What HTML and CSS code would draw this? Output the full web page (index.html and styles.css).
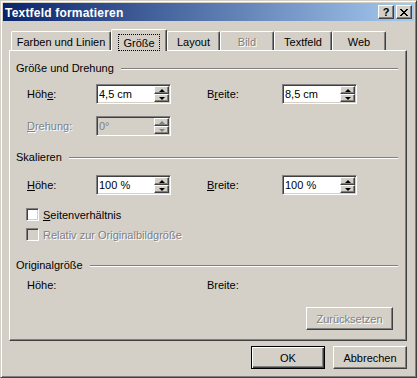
FILE: index.html
```html
<!DOCTYPE html>
<html lang="de">
<head>
    <meta charset="UTF-8">
    <title>Textfeld formatieren</title>
    <link rel="stylesheet" href="styles.css">
</head>
<body>

<div class="window">
    <div class="titlebar">
        <span class="title">Textfeld formatieren</span>
        <div class="caption-buttons">
            <div class="cap-btn cap-help">?</div>
            <div class="cap-btn">
                <svg width="8" height="7" viewBox="0 0 8 7" shape-rendering="crispEdges"><path fill="#000" d="M0 0h2v1H0zM6 0h2v1H6zM1 1h2v1H1zM5 1h2v1H5zM2 2h4v1H2zM3 3h2v1H3zM2 4h4v1H2zM1 5h2v1H1zM5 5h2v1H5zM0 6h2v1H0zM6 6h2v1H6z"/></svg>
            </div>
        </div>
    </div>

    <div class="dialog">
        <!-- Reiter -->
        <div class="tabs">
            <div class="tab" style="width: 100px;">Farben und Linien</div>
            <div class="tab tab-active" style="width: 56px;"><span class="focus">Größe</span></div>
            <div class="tab" style="width: 53px;">Layout</div>
            <div class="tab tab-disabled" style="width: 54px;">Bild</div>
            <div class="tab" style="width: 58px;">Textfeld</div>
            <div class="tab" style="width: 54px;">Web</div>
        </div>

        <div class="panel">
            <div class="group-title"><span>Größe und Drehung</span><i class="etch"></i></div>
            <div class="field-row row-1">
                <div class="field">
                    <label>Höh<u>e</u>:</label>
                    <div class="spin">
                        <span class="spin-value">4,5 cm</span>
                        <div class="spin-btns">
                            <div class="spin-btn"><i class="arrow-up"></i></div>
                            <div class="spin-btn"><i class="arrow-down"></i></div>
                        </div>
                    </div>
                </div>
                <div class="field">
                    <label>B<u>r</u>eite:</label>
                    <div class="spin">
                        <span class="spin-value">8,5 cm</span>
                        <div class="spin-btns">
                            <div class="spin-btn"><i class="arrow-up"></i></div>
                            <div class="spin-btn"><i class="arrow-down"></i></div>
                        </div>
                    </div>
                </div>
            </div>
            <div class="field-row row-2">
                <div class="field">
                    <label class="disabled"><u>D</u>rehung:</label>
                    <div class="spin spin-disabled">
                        <span class="spin-value">0°</span>
                        <div class="spin-btns">
                            <div class="spin-btn"><i class="arrow-up"></i></div>
                            <div class="spin-btn"><i class="arrow-down"></i></div>
                        </div>
                    </div>
                </div>
            </div>

            <div class="group-title group-2"><span>Skalieren</span><i class="etch"></i></div>
            <div class="field-row row-3">
                <div class="field">
                    <label><u>H</u>öhe:</label>
                    <div class="spin">
                        <span class="spin-value">100 %</span>
                        <div class="spin-btns">
                            <div class="spin-btn"><i class="arrow-up"></i></div>
                            <div class="spin-btn"><i class="arrow-down"></i></div>
                        </div>
                    </div>
                </div>
                <div class="field">
                    <label><u>B</u>reite:</label>
                    <div class="spin">
                        <span class="spin-value">100 %</span>
                        <div class="spin-btns">
                            <div class="spin-btn"><i class="arrow-up"></i></div>
                            <div class="spin-btn"><i class="arrow-down"></i></div>
                        </div>
                    </div>
                </div>
            </div>
            <div class="check-row check-1">
                <span class="checkbox"></span>
                <span><u>S</u>eitenverhältnis</span>
            </div>
            <div class="check-row check-2">
                <span class="checkbox checkbox-disabled"></span>
                <span class="disabled">Relativ zur Originalbildgröße</span>
            </div>

            <div class="group-title group-3"><span>Originalgröße</span><i class="etch"></i></div>
            <div class="field-row row-4">
                <div class="field"><label>Höhe:</label></div>
                <div class="field"><label>Breite:</label></div>
            </div>
            <div class="reset-row">
                <div class="btn btn-disabled" style="width: 87px;">Zurücksetzen</div>
            </div>
        </div>

        <div class="buttons">
            <div class="btn btn-default">OK</div>
            <div class="btn">Abbrechen</div>
        </div>
    </div>
</div>

</body>
</html>
```

FILE: styles.css
```css
/* Klassischer Windows-Dialog */
body {
    margin: 0;
    font-family: "Liberation Sans", Arial, sans-serif;
    font-size: 11px;
    color: #000;
}

.window {
    width: 417px;
    height: 378px;
    box-sizing: border-box;
    background-color: #d4d0c8;
    border: 1px solid;
    border-color: #d4d0c8 #404040 #404040 #d4d0c8;
    box-shadow: inset 1px 1px #fff, inset -1px -1px #808080;
    padding: 2px;
}

.titlebar {
    height: 18px;
    display: flex;
    align-items: center;
    padding: 0 2px;
    background: linear-gradient(to right, #0a246a, #a6caf0);
}

.title {
    flex: 1;
    color: #fff;
    font-weight: bold;
    font-size: 12px;
    letter-spacing: 0.2px;
    padding-top: 1px;
}

.caption-buttons {
    display: flex;
    gap: 2px;
}

.cap-btn {
    width: 16px;
    height: 14px;
    box-sizing: border-box;
    display: flex;
    justify-content: center;
    align-items: center;
    background-color: #d4d0c8;
    border: 1px solid;
    border-color: #fff #404040 #404040 #fff;
    box-shadow: inset -1px -1px #808080;
}

.cap-help {
    font-weight: bold;
    font-size: 11px;
    line-height: 12px;
}

.dialog {
    padding: 8px 7px 0 6px;
}

/* Reiter */
.tabs {
    display: flex;
    align-items: flex-end;
    height: 21px;
    padding-left: 2px;
}

.tab {
    height: 19px;
    box-sizing: border-box;
    display: flex;
    justify-content: center;
    align-items: center;
    border-top: 1px solid #fff;
    border-left: 1px solid #fff;
    border-right: 1px solid #404040;
    border-radius: 2px 2px 0 0;
    box-shadow: inset -1px 0 #808080;
    padding-top: 1px;
}

.tab-active {
    position: relative;
    z-index: 1;
    height: 22px;
    margin-bottom: -1px;
    background-color: #d4d0c8;
    padding-top: 3px;
}

.focus {
    border: 1px dotted #000;
    padding: 2px 4px 1px;
    line-height: 12px;
}

.tab-disabled,
.disabled {
    color: #808080;
    text-shadow: 1px 1px 0 #fff;
}

.panel {
    width: 398px;
    height: 291px;
    box-sizing: border-box;
    border: 1px solid;
    border-color: #fff #404040 #404040 #fff;
    box-shadow: inset -1px -1px #808080;
    padding: 11px 8px 0 6px;
}

.group-title {
    display: flex;
    align-items: center;
    height: 13px;
    line-height: 13px;
}

.etch {
    flex: 1;
    margin-left: 7px;
    border-top: 1px solid #808080;
    border-bottom: 1px solid #fff;
}

.group-2 { margin-top: 15px; }
.group-3 { margin-top: 18px; }

.field-row {
    display: flex;
    padding-left: 11px;
}

.row-1 { margin-top: 9px; }
.row-2 { margin-top: 12px; }
.row-3 { margin-top: 11px; }
.row-4 { margin-top: 7px; line-height: 13px; }

.field {
    display: flex;
    align-items: center;
    width: 180px;
}

.field label {
    width: 69px;
}

.field + .field label {
    width: 75px;
}

/* Drehfeld */
.spin {
    width: 75px;
    height: 20px;
    box-sizing: border-box;
    display: flex;
    background-color: #fff;
    border: 1px solid;
    border-color: #808080 #fff #fff #808080;
    box-shadow: inset 1px 1px #404040, inset -1px -1px #d4d0c8;
    padding: 1px;
}

.spin-value {
    flex: 1;
    padding-left: 1px;
    line-height: 16px;
}

.spin-disabled {
    background-color: #d4d0c8;
    color: #808080;
}

.spin-btns {
    width: 15px;
    display: flex;
    flex-direction: column;
}

.spin-btn {
    height: 8px;
    box-sizing: border-box;
    display: flex;
    justify-content: center;
    align-items: center;
    background-color: #d4d0c8;
    border: 1px solid;
    border-color: #fff #404040 #404040 #fff;
    box-shadow: inset -1px -1px #808080;
}

.arrow-up,
.arrow-down {
    width: 0;
    height: 0;
    border-left: 3px solid transparent;
    border-right: 3px solid transparent;
}

.arrow-up { border-bottom: 3px solid #000; }
.arrow-down { border-top: 3px solid #000; }

.spin-disabled .arrow-up { border-bottom-color: #808080; }
.spin-disabled .arrow-down { border-top-color: #808080; }

/* Kontrollkästchen */
.check-row {
    display: flex;
    align-items: center;
    height: 13px;
    padding-left: 10px;
    gap: 4px;
}

.check-1 { margin-top: 13px; }
.check-2 { margin-top: 7px; }

.checkbox {
    width: 13px;
    height: 13px;
    box-sizing: border-box;
    background-color: #fff;
    border: 1px solid;
    border-color: #808080 #fff #fff #808080;
    box-shadow: inset 1px 1px #404040, inset -1px -1px #d4d0c8;
}

.checkbox-disabled {
    background-color: #d4d0c8;
}

.reset-row {
    display: flex;
    justify-content: flex-end;
    margin-top: 15px;
    padding-right: 5px;
}

/* Schaltflächen */
.btn {
    width: 74px;
    height: 23px;
    box-sizing: border-box;
    display: flex;
    justify-content: center;
    align-items: center;
    border: 1px solid;
    border-color: #fff #404040 #404040 #fff;
    box-shadow: inset -1px -1px #808080;
}

.btn-default {
    border-color: #000;
    box-shadow: inset 1px 1px #fff, inset -1px -1px #404040, inset -2px -2px #808080;
}

.btn-disabled {
    color: #808080;
    text-shadow: 1px 1px 0 #fff;
}

.buttons {
    display: flex;
    justify-content: flex-end;
    gap: 8px;
    margin-top: 5px;
}
```
